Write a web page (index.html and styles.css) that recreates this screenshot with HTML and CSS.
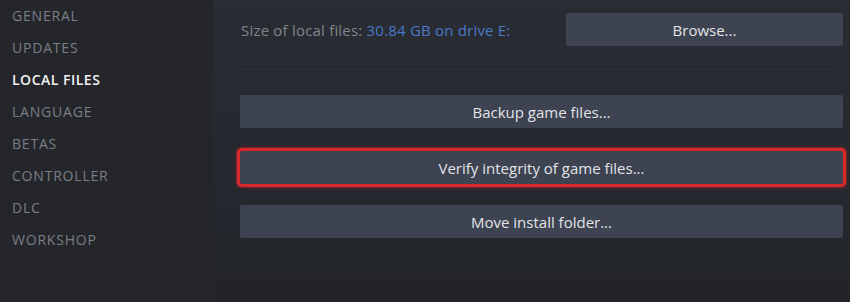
FILE: index.html
```html
<!DOCTYPE html>
<html>
<head>
<meta charset="utf-8">
<link rel="stylesheet" href="styles.css">
</head>
<body>
<div class="app">
  <nav class="sidebar">
    <div class="nav-item">GENERAL</div>
    <div class="nav-item">UPDATES</div>
    <div class="nav-item active">LOCAL FILES</div>
    <div class="nav-item">LANGUAGE</div>
    <div class="nav-item">BETAS</div>
    <div class="nav-item">CONTROLLER</div>
    <div class="nav-item">DLC</div>
    <div class="nav-item">WORKSHOP</div>
  </nav>
  <main class="content">
    <div class="size-row">
      <div class="size-text">Size of local files: <span class="size-value">30.84 GB on drive E:</span></div>
      <button class="btn btn-browse">Browse...</button>
    </div>
    <div class="separator"></div>
    <button class="btn btn-wide btn-backup">Backup game files...</button>
    <button class="btn btn-wide btn-verify highlighted">Verify integrity of game files...</button>
    <button class="btn btn-wide btn-move">Move install folder...</button>
  </main>
</div>
</body>
</html>
```

FILE: styles.css
```css
html, body {
  margin: 0;
  padding: 0;
  width: 850px;
  height: 302px;
  overflow: hidden;
  background: #25282f;
}

.app {
  display: flex;
  width: 850px;
  height: 302px;
  font-family: "Open Sans", "Noto Sans", sans-serif;
}

.sidebar {
  width: 213px;
  flex: none;
  background: #24262c;
  display: flex;
  flex-direction: column;
}

.nav-item {
  height: 32px;
  line-height: 32px;
  padding-left: 12px;
  font-size: 14px;
  font-weight: 500;
  color: #7b7e84;
  letter-spacing: 0.8px;
}

.nav-item.active {
  color: #f2f2f2;
  font-weight: 600;
  letter-spacing: 0.5px;
}

.content {
  flex: 1;
  padding: 13px 7px 0 27px;
  background: linear-gradient(180deg, #292c33 0%, #25282f 60%, #222429 100%);
  display: flex;
  flex-direction: column;
}

.size-row {
  display: flex;
  align-items: center;
  justify-content: space-between;
  height: 33px;
}

.size-text {
  font-size: 15px;
  letter-spacing: 0.2px;
  color: #80858c;
  padding-left: 1px;
}

.size-value {
  color: #4a78c8;
}

.btn {
  border: none;
  background: #3d4350;
  color: #e2e4e8;
  font-family: "Open Sans", "Noto Sans", sans-serif;
  font-size: 15px;
  height: 33px;
  border-radius: 2px;
  padding: 0;
  cursor: pointer;
}

.btn-browse {
  width: 277px;
}

.separator {
  height: 1px;
  background: #2f323a;
  margin: 23px 6px 0 0;
}

.btn-wide {
  width: 603px;
}

.btn-backup {
  margin-top: 25px;
}

.btn-verify {
  margin-top: 23px;
}

.btn-move {
  margin-top: 21px;
}

.highlighted {
  outline: 3px solid #d8282a;
  outline-offset: 0;
  box-shadow: 0 0 0 4px rgba(216, 40, 42, 0.32), 0 0 6px 4px rgba(216, 40, 42, 0.2);
}
```
